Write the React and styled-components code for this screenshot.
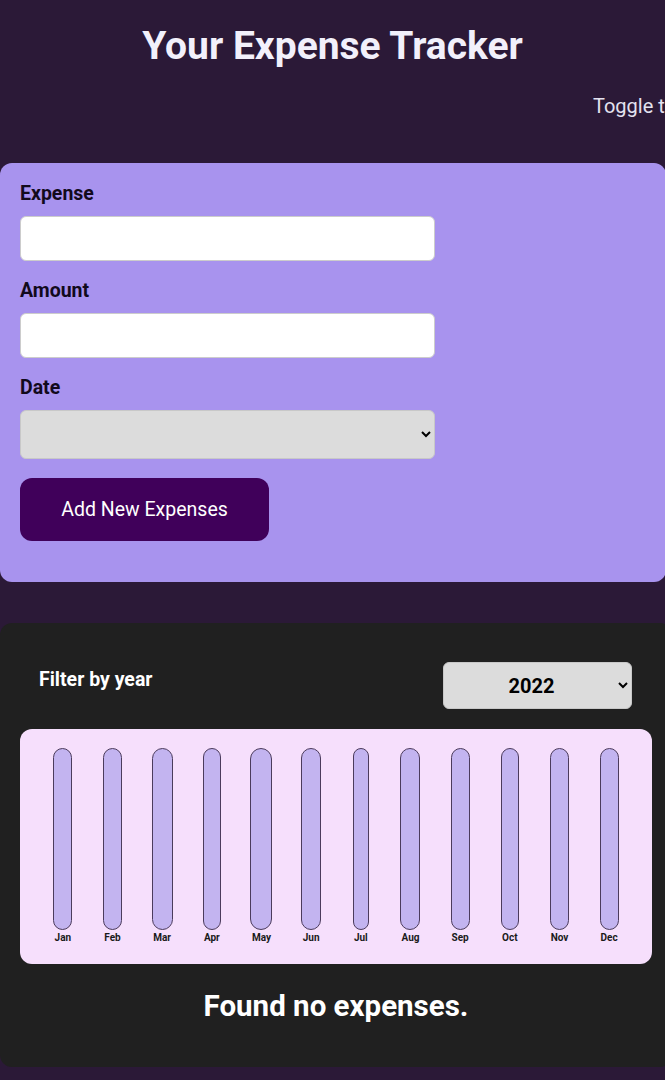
import React from 'react';
import styled, { createGlobalStyle } from 'styled-components';

const GlobalStyle = createGlobalStyle`
  html, body {
    margin: 0;
    padding: 0;
    background: #2b1937;
    overflow-x: hidden;
  }
  body {
    font-family: Roboto, 'Noto Sans', sans-serif;
  }
`;

const Page = styled.div`
  width: 672px;
  padding-bottom: 20px;
`;

const Title = styled.h1`
  margin: 0;
  padding-top: 23px;
  width: 665px;
  text-align: center;
  font-size: 39px;
  line-height: 46px;
  font-weight: 700;
  color: #f2f0fb;
`;

const ToggleRow = styled.div`
  margin-top: 26px;
  padding-left: 593px;
  font-size: 20px;
  line-height: 22px;
  color: #e4e2f0;
  white-space: nowrap;
`;

const FormCard = styled.form`
  box-sizing: border-box;
  margin-top: 46px;
  width: 666px;
  padding: 20px 20px 41px;
  background: #a893ee;
  border-radius: 12px;
`;

const Field = styled.div`
  display: flex;
  flex-direction: column;
  margin-bottom: 19px;
`;

const Label = styled.label`
  font-size: 19.5px;
  line-height: 22px;
  font-weight: 700;
  color: #120a1c;
  margin-bottom: 11px;
`;

const TextInput = styled.input`
  box-sizing: border-box;
  width: 415px;
  height: 45px;
  border: 1px solid #ccc;
  border-radius: 6px;
  background: #fff;
  font: inherit;
`;

const DateSelect = styled.select`
  box-sizing: border-box;
  width: 415px;
  height: 49px;
  border: 1px solid #c8c8c8;
  border-radius: 6px;
  background: #dcdcdc;
  font: inherit;
  color: #000;
`;

const SubmitButton = styled.button`
  width: 249px;
  height: 63px;
  border: none;
  border-radius: 12px;
  background: #40005a;
  color: #fff;
  font-family: Roboto, sans-serif;
  font-size: 19.5px;
`;

const ExpensesCard = styled.section`
  box-sizing: border-box;
  margin-top: 41px;
  width: 672px;
  padding: 20px;
  background: #202020;
  border-radius: 12px;
`;

const FilterRow = styled.div`
  display: flex;
  align-items: center;
  justify-content: space-between;
  padding: 0 20px 0 19px;
  margin: 19px 0 20px;
`;

const FilterLabel = styled.label`
  font-size: 19.5px;
  font-weight: 700;
  color: #fff;
  margin-bottom: 12px;
`;

const YearSelect = styled.select`
  box-sizing: border-box;
  width: 189px;
  height: 47px;
  border: 1px solid #c8c8c8;
  border-radius: 6px;
  background: #dcdcdc;
  font-family: Roboto, sans-serif;
  font-size: 20px;
  font-weight: 700;
  text-align: center;
  text-align-last: center;
  color: #000;
`;

const Chart = styled.div`
  box-sizing: border-box;
  width: 632px;
  height: 235px;
  padding: 19px 18px 20px;
  display: grid;
  grid-template-columns: repeat(12, 1fr);
  background: #f6dffc;
  border-radius: 12px;
`;

const BarColumn = styled.div`
  display: flex;
  flex-direction: column;
  align-items: center;
`;

const BarTrack = styled.div`
  box-sizing: border-box;
  width: ${p => p.$w}px;
  flex: 1;
  border: 1px solid #4b3b5c;
  border-radius: 12px;
  background: #c3b4f0;
`;

const BarLabel = styled.div`
  margin-top: 2px;
  font-size: 10px;
  line-height: 12px;
  font-weight: 700;
  color: #1a1a1a;
`;

const EmptyText = styled.h2`
  margin: 26px 0 24px;
  text-align: center;
  font-size: 29.5px;
  line-height: 33px;
  font-weight: 700;
  color: #fff;
`;

const months = [
  ['Jan', 19], ['Feb', 19], ['Mar', 21], ['Apr', 18], ['May', 22], ['Jun', 20],
  ['Jul', 16], ['Aug', 20], ['Sep', 19], ['Oct', 18], ['Nov', 19], ['Dec', 19]
];

export default function App() {
  return (
    <Page>
      <GlobalStyle />
      <Title>Your Expense Tracker</Title>
      <ToggleRow>Toggle theme</ToggleRow>
      <FormCard onSubmit={e => e.preventDefault()}>
        <Field>
          <Label>Expense</Label>
          <TextInput type="text" />
        </Field>
        <Field>
          <Label>Amount</Label>
          <TextInput type="number" />
        </Field>
        <Field>
          <Label>Date</Label>
          <DateSelect>
            <option value=""></option>
          </DateSelect>
        </Field>
        <SubmitButton type="submit">Add New Expenses</SubmitButton>
      </FormCard>
      <ExpensesCard>
        <FilterRow>
          <FilterLabel>Filter by year</FilterLabel>
          <YearSelect defaultValue="2022">
            <option value="2022">2022</option>
            <option value="2021">2021</option>
            <option value="2020">2020</option>
          </YearSelect>
        </FilterRow>
        <Chart>
          {months.map(([m, w]) => (
            <BarColumn key={m}>
              <BarTrack $w={w} />
              <BarLabel>{m}</BarLabel>
            </BarColumn>
          ))}
        </Chart>
        <EmptyText>Found no expenses.</EmptyText>
      </ExpensesCard>
    </Page>
  );
}
